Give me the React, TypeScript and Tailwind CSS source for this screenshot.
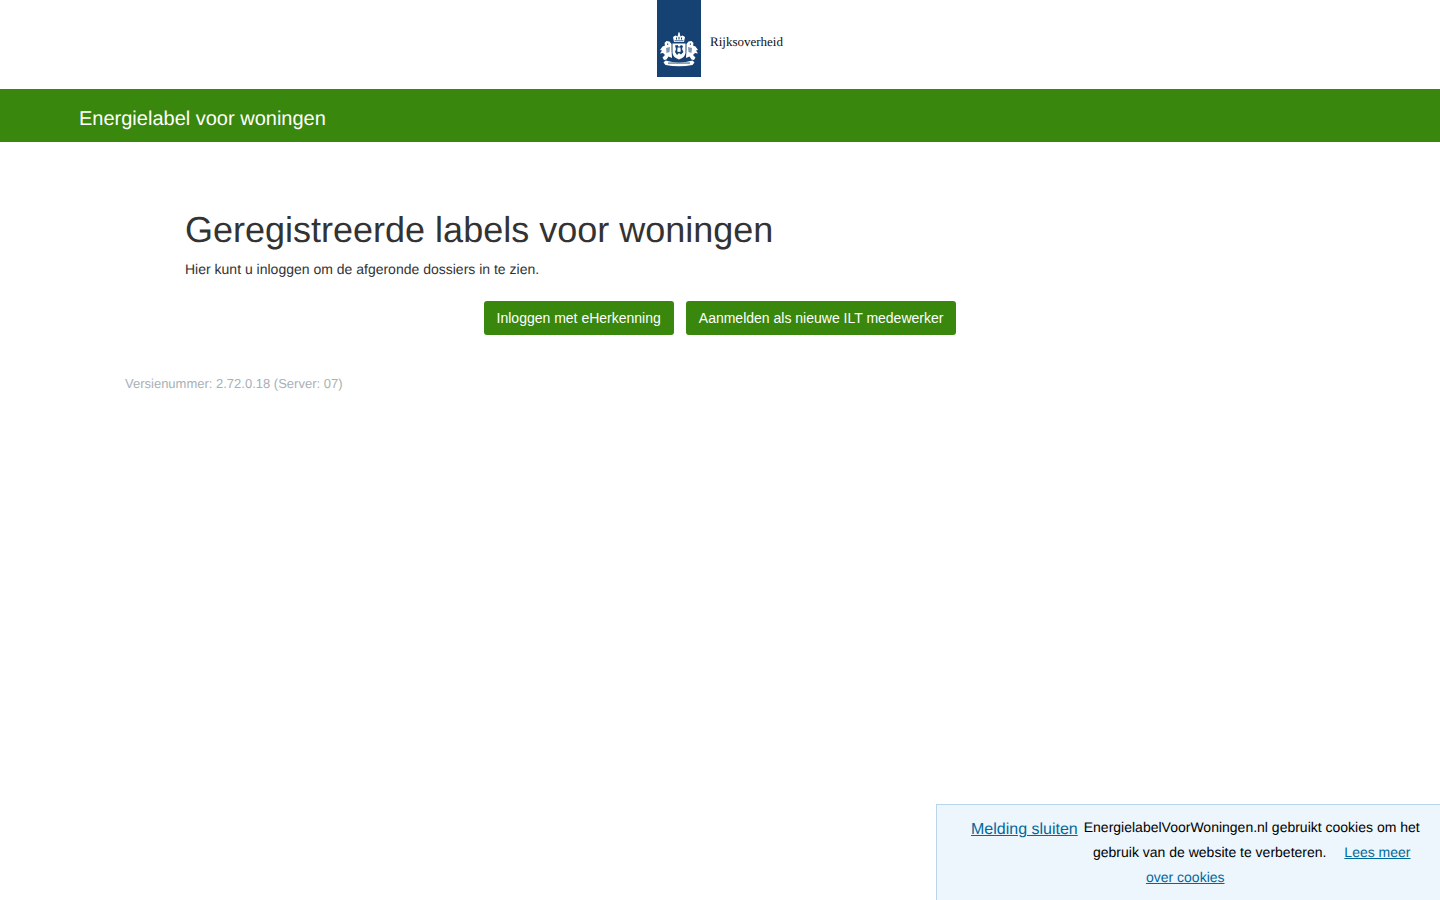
const sans = "font-['Liberation_Sans',Arial,sans-serif]"

function Crest() {
  return (
    <svg width="44" height="77" viewBox="0 0 44 77" className="block bg-[#154273]">
      <g fill="#fff">
        {/* crown */}
        <path d="M17 42 L16 37 L18.5 35.5 L20.5 36.5 L21.2 34 L21.2 32.6 H22.8 L22.8 34 L23.5 36.5 L25.5 35.5 L28 37 L27 42 Z" />
        {/* shield */}
        <path d="M15.5 43.5 H28.5 V53 Q28 57.5 22 59.5 Q16 57.5 15.5 53 Z" />
        {/* left lion */}
        <path d="M14.5 44 L12.5 41.5 L9.5 41 L7.5 43 L8 45.5 L5.5 46.5 L3 50 L5 50.5 L3 53.5 L6 53 L8 55 L5.5 57.5 L7 60 L9.5 59.5 L11.5 56.5 L15 58 L14.5 50 Z" />
        {/* right lion */}
        <path d="M29.5 44 L31.5 41.5 L34.5 41 L36.5 43 L36 45.5 L38.5 46.5 L41 50 L39 50.5 L41 53.5 L38 53 L36 55 L38.5 57.5 L37 60 L34.5 59.5 L32.5 56.5 L29 58 L29.5 50 Z" />
        {/* ribbon */}
        <path d="M8.5 60.5 Q22 64.5 35.5 60.5 L37.5 62.5 L35.5 65 Q22 67.5 8.5 65 L6.5 62.5 Z" />
      </g>
      <g fill="#154273">
        {/* shield and crown details */}
        <path d="M18 45.5 L20.5 45 L22 47 L24 45 L26 46 L25 49 L26.5 52 L24 54.5 L22 53 L20 55 L18 52 L19 49 Z" />
        <rect x="17.5" y="40.4" width="9" height="0.8" />
        <rect x="19" y="37.5" width="1" height="2" />
        <rect x="21.5" y="36.8" width="1" height="2.7" />
        <rect x="24" y="37.5" width="1" height="2" />
        {/* lion details */}
        <path d="M10 43.5 h1.2 v1.2 h-1.2 Z M32.8 43.5 h1.2 v1.2 h-1.2 Z" />
        <path d="M9 48 L13 47 L12.5 52 L9.5 53 Z M35 48 L31 47 L31.5 52 L34.5 53 Z" opacity="0.55" />
        <rect x="11" y="62.6" width="22" height="0.9" />
      </g>
      <path d="M20.6 47.5 L23.4 47.5 L23.8 51.5 L22 52 L20.2 51.5 Z" fill="#fff" />
    </svg>
  )
}

export default function App() {
  return (
    <div className={`${sans} relative h-[900px] overflow-hidden bg-white text-[14px] text-[#333] [text-rendering:geometricPrecision]`}>
      {/* Logo */}
      <header className="flex h-[89px] justify-center">
        <div className="flex h-[77px] w-[126px]">
          <Crest />
          <span className="mt-[34px] ml-[9px] font-['Liberation_Serif',serif] text-[13px] leading-[16px] whitespace-nowrap text-[#111]">
            Rijksoverheid
          </span>
        </div>
      </header>

      {/* Green bar */}
      <div className="flex h-[53px] items-center bg-[#39870c] pl-[79px] pt-[6px] text-[20px] text-white">
        Energielabel voor woningen
      </div>

      {/* Content */}
      <main className="pt-[64px]">
        <div className="pl-[185px]">
          <h1 className="text-[36px] leading-[48px] font-normal text-[#333]">Geregistreerde labels voor woningen</h1>
          <p className="mt-[5px] leading-[20px]">Hier kunt u inloggen om de afgeronde dossiers in te zien.</p>
        </div>

        <div className="mt-[22px] flex justify-center gap-3">
          <button className="h-[34px] rounded-[3px] bg-[#39870c] px-[13px] text-white">Inloggen met eHerkenning</button>
          <button className="h-[34px] rounded-[3px] bg-[#39870c] px-[13px] text-white">
            Aanmelden als nieuwe ILT medewerker
          </button>
        </div>

        <p className="mt-[39px] pl-[125px] text-[13px] leading-[19px] text-[#a8b0b6]">
          Versienummer: 2.72.0.18 (Server: 07)
        </p>
      </main>

      {/* Cookie notice */}
      <aside className="absolute right-0 bottom-0 flex h-[96px] w-[504px] border-t border-l border-[#b9d5ea] bg-[#edf6fc] pt-[10px] pl-[34px] text-center text-[14px] leading-[25px] text-black">
        <a href="#" className="shrink-0 text-[16px] leading-[30px] text-[#01689b] underline">
          Melding sluiten
        </a>
        <p className="ml-[3px] w-[342px]">
          EnergielabelVoorWoningen.nl gebruikt cookies om het gebruik van de website te verbeteren.{' '}
          <a href="#" className="ml-[14px] text-[#01689b] underline">
            Lees meer over cookies
          </a>
          <span className="inline-block w-[133px]" />
        </p>
      </aside>
    </div>
  )
}
